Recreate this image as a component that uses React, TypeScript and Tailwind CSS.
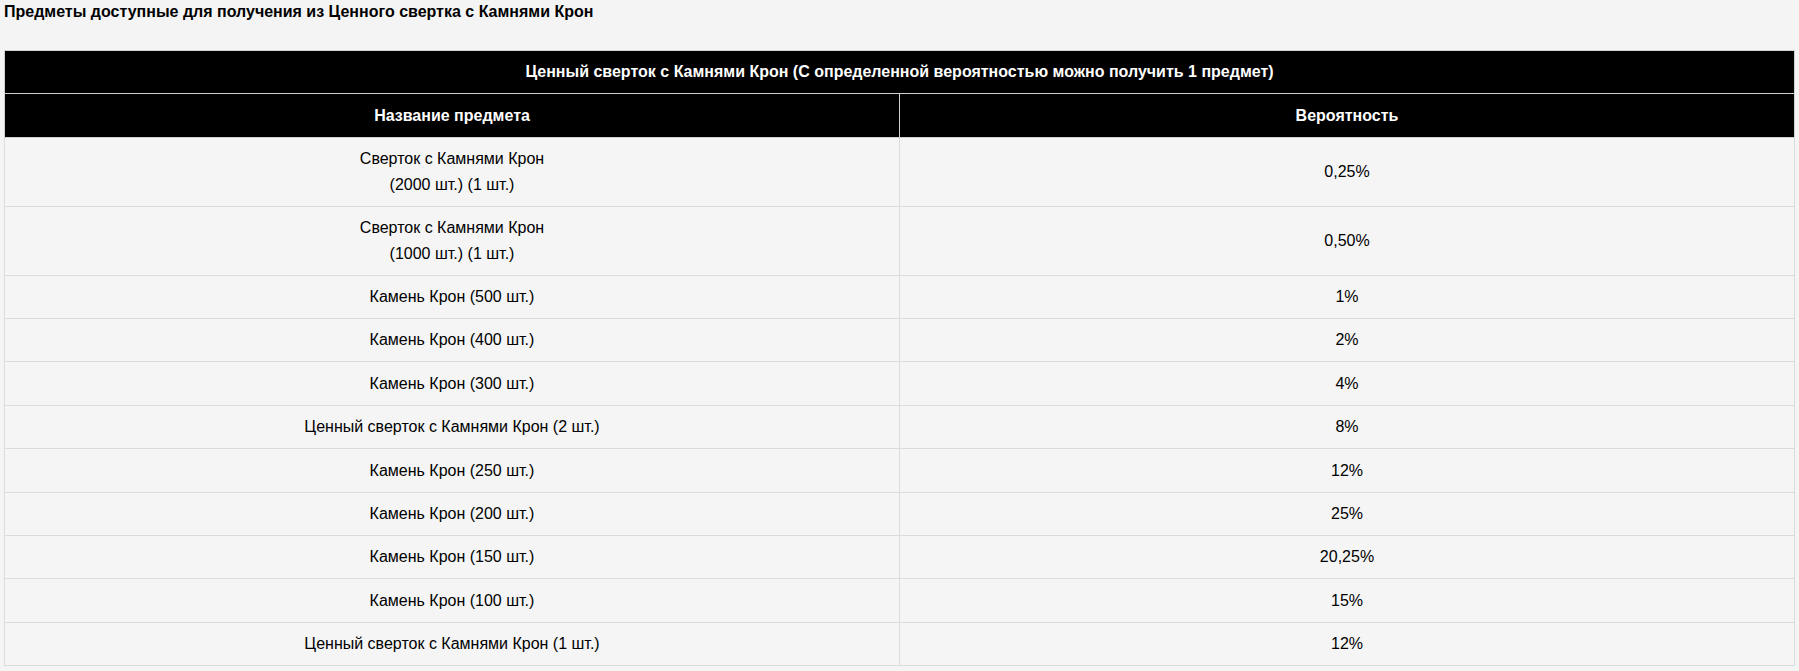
const rows: { name: string[]; chance: string }[] = [
  { name: ["Сверток с Камнями Крон", "(2000 шт.) (1 шт.)"], chance: "0,25%" },
  { name: ["Сверток с Камнями Крон", "(1000 шт.) (1 шт.)"], chance: "0,50%" },
  { name: ["Камень Крон (500 шт.)"], chance: "1%" },
  { name: ["Камень Крон (400 шт.)"], chance: "2%" },
  { name: ["Камень Крон (300 шт.)"], chance: "4%" },
  { name: ["Ценный сверток с Камнями Крон (2 шт.)"], chance: "8%" },
  { name: ["Камень Крон (250 шт.)"], chance: "12%" },
  { name: ["Камень Крон (200 шт.)"], chance: "25%" },
  { name: ["Камень Крон (150 шт.)"], chance: "20,25%" },
  { name: ["Камень Крон (100 шт.)"], chance: "15%" },
  { name: ["Ценный сверток с Камнями Крон (1 шт.)"], chance: "12%" },
];

export default function App() {
  return (
    <div className="min-h-screen bg-[#f4f4f4] px-[4px] pt-[3px] font-['Liberation_Sans',Arial,sans-serif] text-[16px] text-black">
      <h3 className="text-[16px] leading-[18px] font-bold">
        Предметы доступные для получения из Ценного свертка с Камнями Крон
      </h3>
      <table className="mt-[29px] w-full table-fixed border-collapse border border-[#dcdcdc] text-center leading-[25.6px]">
        <thead>
          <tr className="bg-black text-white">
            <th colSpan={2} className="border border-[#d0d0d0] py-[8.4px] font-bold">
              Ценный сверток с Камнями Крон (С определенной вероятностью можно получить 1 предмет)
            </th>
          </tr>
          <tr className="bg-black text-white">
            <th className="w-1/2 border border-[#d0d0d0] py-[8.4px] font-bold">Название предмета</th>
            <th className="w-1/2 border border-[#d0d0d0] py-[8.4px] font-bold">Вероятность</th>
          </tr>
        </thead>
        <tbody>
          {rows.map((row) => (
            <tr key={row.name.join(" ") + row.chance} className="bg-[#f5f5f5]">
              <td className="border border-[#dcdcdc] py-[8.4px]">
                {row.name.map((line) => (
                  <div key={line}>{line}</div>
                ))}
              </td>
              <td className="border border-[#dcdcdc] py-[8.4px]">{row.chance}</td>
            </tr>
          ))}
        </tbody>
      </table>
    </div>
  );
}
